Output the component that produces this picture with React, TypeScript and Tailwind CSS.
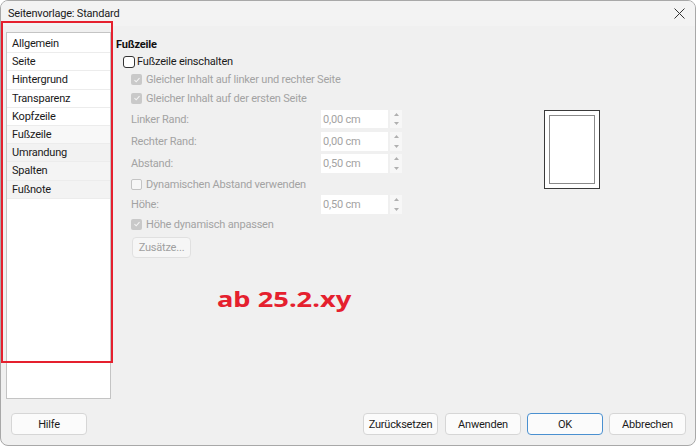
import React from "react";

const FONT = { fontFamily: 'Roboto, "Noto Sans", sans-serif' };

function CheckDisabled() {
  return (
    <span className="flex h-[11px] w-[11px] items-center justify-center rounded-[2px] bg-[#c9c9c9]">
      <svg width="8" height="8" viewBox="0 0 8 8">
        <path d="M1.5 4.2 L3.2 5.8 L6.5 2.2" stroke="#f4f4f4" strokeWidth="1.1" fill="none" />
      </svg>
    </span>
  );
}

function Spin({ label, value, cls }: { label: string; value: string; cls: string }) {
  return (
    <div className={`flex items-center ${cls}`}>
      <span className="w-[205px] pl-[15px] text-[#a3a3a3]">{label}</span>
      <div className="flex h-full w-[67px] items-center bg-white pl-[2px] text-[#a3a3a3]">{value}</div>
      <div className="ml-[2px] flex h-full w-[12px] flex-col">
        <div className="flex flex-1 items-center justify-center bg-[#f7f7f7]">
          <svg width="5" height="3" viewBox="0 0 5 3"><path d="M0 3 L2.5 0 L5 3 Z" fill="#b0b0b0" /></svg>
        </div>
        <div className="flex flex-1 items-center justify-center bg-[#f7f7f7]">
          <svg width="5" height="3" viewBox="0 0 5 3"><path d="M0 0 L2.5 3 L5 0 Z" fill="#b0b0b0" /></svg>
        </div>
      </div>
    </div>
  );
}

function Btn({ children, cls }: { children: React.ReactNode; cls: string }) {
  return (
    <div className={`flex h-[22px] items-center justify-center rounded-[4px] border bg-[#fbfbfb] text-[#1b1b1b] ${cls}`}>
      {children}
    </div>
  );
}

export default function App() {
  const items = ["Allgemein", "Seite", "Hintergrund", "Transparenz", "Kopfzeile", "Fußzeile", "Umrandung", "Spalten", "Fußnote"];
  const bgs = ["bg-white", "bg-white", "bg-white", "bg-white", "bg-white", "bg-[#f8f8f8]", "bg-[#f2f2f2]", "bg-[#f4f4f4]", "bg-[#f3f3f3]"];
  return (
    <div style={FONT} className="relative h-[446px] w-[696px] overflow-hidden text-[11px] leading-none tracking-[-0.2px]">
      <div className="flex h-[446px] w-[696px] flex-col overflow-hidden rounded-[8px] border border-[#a8a8a8] bg-[#f0f0f0]">
        {/* title bar */}
        <div className="flex h-[25px] shrink-0 items-center justify-between bg-[#f3f3f3] pl-[7px] pr-[10px] text-[11px] text-[#1a1a1a]">
          <span>Seitenvorlage: Standard</span>
          <svg width="11" height="11" viewBox="0 0 11 11">
            <path d="M0.5 0.5 L10.5 10.5 M10.5 0.5 L0.5 10.5" stroke="#333" strokeWidth="1" />
          </svg>
        </div>
        {/* body */}
        <div className="flex h-[373px] shrink-0 pt-[6px]">
          <div className="ml-[5px] h-[367px] w-[105px] shrink-0 border border-[#c4c4c4] bg-white pt-[2px] text-[#1a1a1a]">
            {items.map((t, i) => (
              <div key={t} className={`flex h-[18.2px] items-center border-b border-[#ececec] pl-[5px] ${bgs[i]}`}>
                {t}
              </div>
            ))}
          </div>
          <div className="flex w-[292px] shrink-0 flex-col pl-[5px] pt-[3px]">
            <div className="flex h-[18px] items-center font-bold text-[#111]">Fußzeile</div>
            <div className="flex h-[17px] items-center pl-[7px] text-[#1a1a1a]">
              <span className="mr-[2px] h-[12px] w-[12px] rounded-[3px] border border-[#333] bg-white" />
              Fußzeile einschalten
            </div>
            <div className="flex h-[19px] items-center gap-[4px] pl-[15px] text-[#a3a3a3]">
              <CheckDisabled />
              Gleicher Inhalt auf linker und rechter Seite
            </div>
            <div className="flex h-[18px] items-center gap-[4px] pl-[15px] text-[#a3a3a3]">
              <CheckDisabled />
              Gleicher Inhalt auf der ersten Seite
            </div>
            <Spin label="Linker Rand:" value="0,00 cm" cls="mt-[3px] h-[18px]" />
            <Spin label="Rechter Rand:" value="0,00 cm" cls="mt-[4px] h-[19px]" />
            <Spin label="Abstand:" value="0,50 cm" cls="mt-[3px] h-[19px]" />
            <div className="mt-[2px] flex h-[18px] items-center gap-[4px] pl-[15px] text-[#a3a3a3]">
              <span className="h-[11px] w-[11px] rounded-[2px] border border-[#c4c4c4] bg-[#f7f7f7]" />
              Dynamischen Abstand verwenden
            </div>
            <Spin label="Höhe:" value="0,50 cm" cls="mt-[2px] h-[19px]" />
            <div className="mt-[1px] flex h-[18px] items-center gap-[4px] pl-[15px] text-[#a3a3a3]">
              <CheckDisabled />
              Höhe dynamisch anpassen
            </div>
            <div className="ml-[16px] mt-[4px] flex h-[21px] w-[59px] items-center justify-center rounded-[4px] border border-[#e0e0e0] bg-[#f6f6f6] text-[#a0a0a0]">
              Zusätze...
            </div>
            <div
              style={{ fontFamily: '"Noto Sans", sans-serif' }}
              className="ml-[101px] mt-[28px] origin-left scale-x-[1.3] text-[21px] font-bold leading-[26px] tracking-normal text-[#e5202e]"
            >
              ab 25.2.xy
            </div>
          </div>
          <div className="ml-[141px] mt-[78px] h-[79px] w-[56px] shrink-0 self-start border border-[#3a3a3a] bg-white p-[4px]">
            <div className="h-full w-full border border-[#8a8a8a] bg-white" />
          </div>
        </div>
        {/* footer */}
        <div className="flex pl-[10px] pr-[9px] pt-[14px]">
          <Btn cls="w-[76px] border-[#d6d6d6]">Hilfe</Btn>
          <div className="flex-1" />
          <Btn cls="w-[75px] border-[#d6d6d6]">Zurücksetzen</Btn>
          <Btn cls="ml-[7px] w-[76px] border-[#d6d6d6]">Anwenden</Btn>
          <Btn cls="ml-[6px] w-[76px] border-[#4a90d0]">OK</Btn>
          <Btn cls="ml-[6px] w-[77px] border-[#d6d6d6]">Abbrechen</Btn>
        </div>
      </div>
      <div className="absolute left-[1px] top-[21px] h-[342px] w-[112px] border-2 border-[#e5202e]" />
    </div>
  );
}
